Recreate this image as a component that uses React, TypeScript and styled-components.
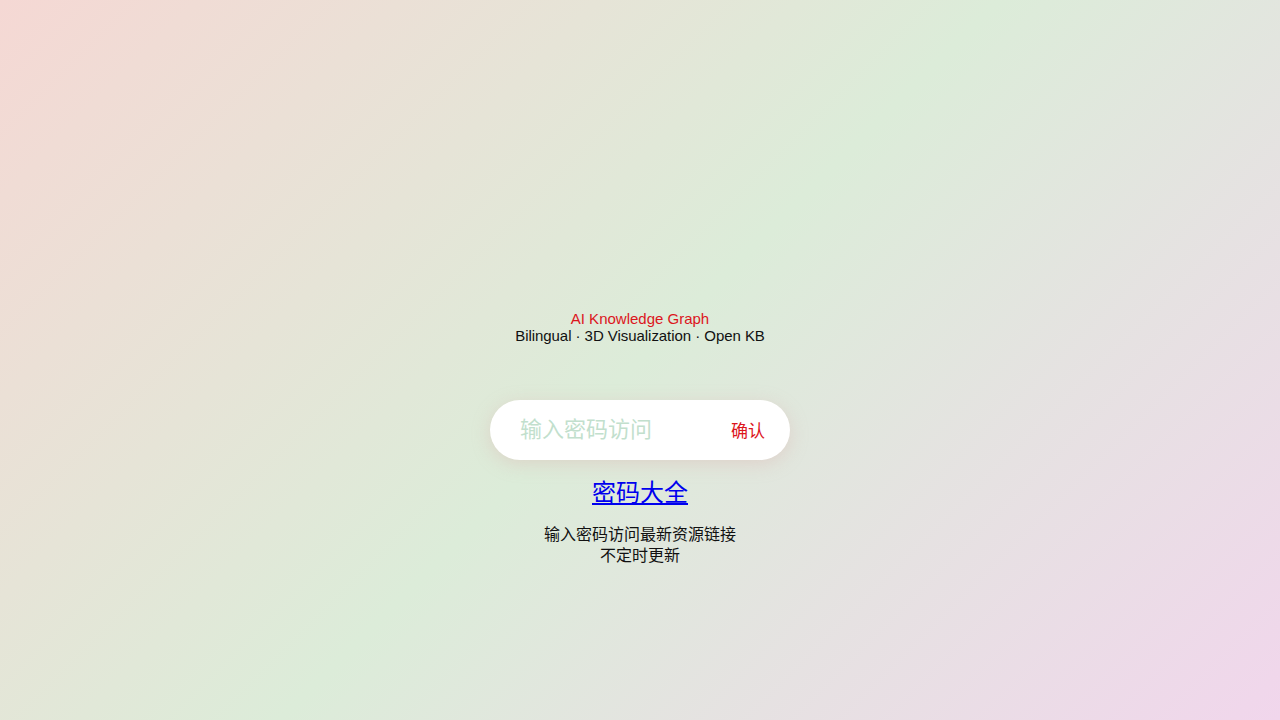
import React, { useState } from 'react';
import styled, { createGlobalStyle } from 'styled-components';

const GlobalStyle = createGlobalStyle`
  html, body {
    margin: 0;
    padding: 0;
  }
  body {
    font-family: "Liberation Sans", Arial, "Noto Sans CJK SC", sans-serif;
  }
`;

const Page = styled.div`
  min-height: 100vh;
  box-sizing: border-box;
  display: flex;
  flex-direction: column;
  align-items: center;
  padding-top: 310px;
  background: linear-gradient(135deg, #f5d8d4 0%, #dcecd9 50%, #f1d6ec 100%);
`;

const Heading = styled.div`
  text-align: center;
  font-size: 15px;
  line-height: 17px;
`;

const Title = styled.div`
  color: #dc151c;
`;

const Subtitle = styled.div`
  color: #111;
  letter-spacing: -0.05px;
`;

const PassBox = styled.form`
  margin-top: 56px;
  width: 300px;
  height: 60px;
  box-sizing: border-box;
  display: flex;
  align-items: center;
  padding: 0 25px 0 30px;
  background: #fff;
  border-radius: 30px;
  box-shadow: 0 4px 18px rgba(220, 170, 170, 0.35);
`;

const PassInput = styled.input`
  flex: 1;
  min-width: 0;
  border: none;
  outline: none;
  background: transparent;
  font-family: "Liberation Sans", "Noto Sans CJK SC", sans-serif;
  font-size: 22px;
  color: #333;
  padding: 0;

  &::placeholder {
    color: #c2dfcd;
  }
`;

const ConfirmButton = styled.button`
  border: none;
  background: none;
  padding: 0 0 2px;
  cursor: pointer;
  font-family: "Liberation Sans", "Noto Sans CJK SC", sans-serif;
  font-size: 17px;
  color: #dc151c;
`;

const PassLink = styled.a`
  margin-top: 19px;
  font-size: 24px;
  line-height: 28px;
  color: #0000ee;
  text-decoration: underline;
`;

const Note = styled.div`
  margin-top: 17px;
  text-align: center;
  font-size: 16px;
  line-height: 21px;
  color: #111;
`;

const App: React.FC = () => {
  const [pass, setPass] = useState('');

  return (
    <>
      <GlobalStyle />
      <Page>
        <Heading>
          <Title>AI Knowledge Graph</Title>
          <Subtitle>Bilingual · 3D Visualization · Open KB</Subtitle>
        </Heading>
        <PassBox onSubmit={(e) => e.preventDefault()}>
          <PassInput
            type="password"
            placeholder="输入密码访问"
            value={pass}
            onChange={(e) => setPass(e.target.value)}
          />
          <ConfirmButton type="submit">确认</ConfirmButton>
        </PassBox>
        <PassLink href="#">密码大全</PassLink>
        <Note>
          输入密码访问最新资源链接
          <br />
          不定时更新
        </Note>
      </Page>
    </>
  );
};

export default App;
